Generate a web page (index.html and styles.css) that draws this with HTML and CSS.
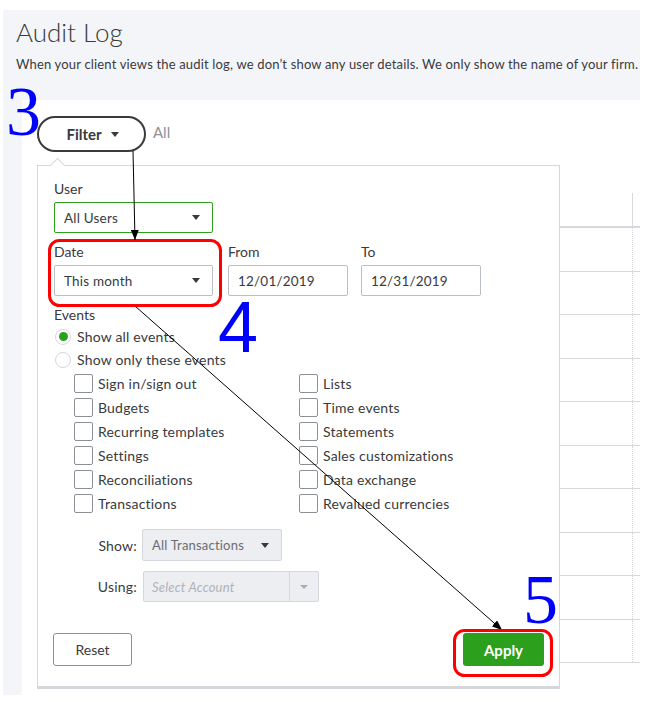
FILE: index.html
```html
<!DOCTYPE html>
<html>
<head>
<meta charset="utf-8">
<link rel="stylesheet" href="styles.css">
</head>
<body>
<div class="page">
  <div class="header">
    <h1 class="title">Audit Log</h1>
    <p class="desc">When your client views the audit log, we don’t show any user details. We only show the name of your firm.</p>
  </div>
  <div class="content">
    <div class="filter-row">
      <button class="pill">Filter <span class="caret"></span></button>
      <span class="all">All</span>
    </div>
    <div class="table">
      <div class="trow thead"><div class="c c1"></div><div class="c c2"></div><div class="c c3"></div><div class="c c4"></div></div>
      <div class="trow"><div class="c c1"></div><div class="c c2"></div><div class="c c3"></div><div class="c c4"></div></div>
      <div class="trow"><div class="c c1"></div><div class="c c2"></div><div class="c c3"></div><div class="c c4"></div></div>
      <div class="trow"><div class="c c1"></div><div class="c c2"></div><div class="c c3"></div><div class="c c4"></div></div>
      <div class="trow"><div class="c c1"></div><div class="c c2"></div><div class="c c3"></div><div class="c c4"></div></div>
      <div class="trow"><div class="c c1"></div><div class="c c2"></div><div class="c c3"></div><div class="c c4"></div></div>
      <div class="trow"><div class="c c1"></div><div class="c c2"></div><div class="c c3"></div><div class="c c4"></div></div>
      <div class="trow"><div class="c c1"></div><div class="c c2"></div><div class="c c3"></div><div class="c c4"></div></div>
      <div class="trow"><div class="c c1"></div><div class="c c2"></div><div class="c c3"></div><div class="c c4"></div></div>
      <div class="trow"><div class="c c1"></div><div class="c c2"></div><div class="c c3"></div><div class="c c4"></div></div>
      <div class="trow"><div class="c c1"></div><div class="c c2"></div><div class="c c3"></div><div class="c c4"></div></div>
    </div>

    <div class="pop">
      <span class="notch"></span>
      <div class="field">
        <div class="lbl">User</div>
        <div class="select sel-user"><span>All Users</span><span class="caret"></span></div>
      </div>
      <div class="date-row">
        <div class="field">
          <div class="lbl">Date</div>
          <div class="select sel-date"><span>This month</span><span class="caret"></span></div>
        </div>
        <div class="field">
          <div class="lbl">From</div>
          <div class="input">12/01/2019</div>
        </div>
        <div class="field">
          <div class="lbl">To</div>
          <div class="input">12/31/2019</div>
        </div>
      </div>
      <div class="lbl events-lbl">Events</div>
      <div class="radio-row"><span class="radio on"></span>Show all events</div>
      <div class="radio-row"><span class="radio"></span>Show only these events</div>
      <div class="checks">
        <div class="chk"><span class="box"></span>Sign in/sign out</div>
        <div class="chk"><span class="box"></span>Lists</div>
        <div class="chk"><span class="box"></span>Budgets</div>
        <div class="chk"><span class="box"></span>Time events</div>
        <div class="chk"><span class="box"></span>Recurring templates</div>
        <div class="chk"><span class="box"></span>Statements</div>
        <div class="chk"><span class="box"></span>Settings</div>
        <div class="chk"><span class="box"></span>Sales customizations</div>
        <div class="chk"><span class="box"></span>Reconciliations</div>
        <div class="chk"><span class="box"></span>Data exchange</div>
        <div class="chk"><span class="box"></span>Transactions</div>
        <div class="chk"><span class="box"></span>Revalued currencies</div>
      </div>
      <div class="opt-row show-row">
        <span class="opt-lbl">Show:</span>
        <div class="select sel-show"><span>All Transactions</span><span class="caret"></span></div>
      </div>
      <div class="opt-row using-row">
        <span class="opt-lbl">Using:</span>
        <div class="sel-using"><span class="ph">Select Account</span><span class="using-btn"><span class="caret light"></span></span></div>
      </div>
      <div class="btn-row">
        <button class="btn reset">Reset</button>
        <button class="btn apply">Apply</button>
      </div>
    </div>
  </div>
</div>

<svg class="annot" width="648" height="702" viewBox="0 0 648 702">
  <defs>
    <marker id="ah" markerWidth="10" markerHeight="8" refX="10" refY="4" orient="auto" markerUnits="userSpaceOnUse">
      <path d="M0,0 L10,4 L0,8 Z" fill="#000"/>
    </marker>
  </defs>
  <text class="num serif" x="6" y="135">3</text>
  <rect x="49.5" y="240.5" width="171" height="65" rx="10" ry="10" fill="none" stroke="#ff0000" stroke-width="3"/>
  <text class="num sans" x="218" y="352">4</text>
  <line x1="133" y1="151" x2="135" y2="240" stroke="#000" stroke-width="1" marker-end="url(#ah)"/>
  <line x1="135" y1="306" x2="502" y2="630" stroke="#000" stroke-width="1" marker-end="url(#ah)"/>
  <text class="num serif" x="523" y="623">5</text>
  <rect x="454.5" y="630.5" width="97" height="45" rx="10" ry="10" fill="none" stroke="#ff0000" stroke-width="3"/>
</svg>
</body>
</html>
```
FILE: styles.css
```css
* { box-sizing: border-box; }
html, body { margin: 0; padding: 0; }
body {
  position: relative;
  width: 648px;
  height: 702px;
  overflow: hidden;
  background: #fff;
  font-family: Lato, "Open Sans", sans-serif;
  color: #393a3d;
}
.page {
  margin: 10px 0 0 3px;
  width: 637px;
  height: 685px;
  background: #f4f5f8;
  overflow: hidden;
  display: flex;
  flex-direction: column;
}
.header {
  height: 90px;
  padding: 6px 0 0 13px;
}
.title {
  margin: 0;
  font-size: 26px;
  font-weight: 300;
  line-height: 32px;
  color: #393a3d;
}
.desc {
  margin: 7px 0 0;
  font-size: 13px;
  line-height: 18px;
  letter-spacing: 0.17px;
  white-space: nowrap;
  color: #393a3d;
}
.content {
  position: relative;
  margin-left: 19px;
  flex: 1;
  background: #fff;
}
.filter-row {
  display: flex;
  align-items: center;
  padding: 16px 0 0 15px;
  gap: 7px;
}
.pill {
  width: 109px;
  height: 36px;
  border: 2px solid #393a3d;
  border-radius: 18px;
  background: #fff;
  font-family: inherit;
  font-size: 15px;
  font-weight: 700;
  color: #393a3d;
  display: flex;
  align-items: center;
  justify-content: center;
  gap: 9px;
  padding: 0 0 0 2px;
}
.caret {
  width: 0;
  height: 0;
  border-left: 4.5px solid transparent;
  border-right: 4.5px solid transparent;
  border-top: 5px solid #393a3d;
}
.caret.light { border-top-color: #a8abb1; border-left-width: 4px; border-right-width: 4px; border-top-width: 4px; }
.all {
  font-size: 15px;
  color: #8d9096;
  margin-top: -4px;
}
.table {
  margin: 41px 0 0 15px;
}
.trow {
  display: grid;
  grid-template-columns: 131px 113px 352px 7px;
  height: 43.5px;
  border-bottom: 1px solid #d6d8dc;
}
.trow .c { border-right: 1px dotted #d6d8dc; }
.trow .c4 { border-right: none; }
.thead { height: 35px; border-bottom: 2px solid #d6d8dc; }
.thead .c { border-right: 1px solid #d6d8dc; }
.thead .c4 { border-right: none; }

/* popover */
.pop {
  position: absolute;
  left: 15px;
  top: 65px;
  width: 523px;
  height: 524px;
  background: #fff;
  border: 1px solid #d4d7dc;
  border-bottom: 3px solid #d4d7dc;
  padding: 13px 15px 0 16px;
}
.notch {
  position: absolute;
  top: -6px;
  left: 14px;
  width: 11px;
  height: 11px;
  background: #fff;
  border-left: 1px solid #d4d7dc;
  border-top: 1px solid #d4d7dc;
  transform: rotate(45deg);
}
.lbl {
  font-size: 14px;
  line-height: 20px;
  color: #393a3d;
  margin-bottom: 3px;
}
.select, .input {
  height: 31px;
  border: 1px solid #babec5;
  border-radius: 2px;
  display: flex;
  align-items: center;
  justify-content: space-between;
  padding: 0 12px 0 9px;
  font-size: 13.5px;
  letter-spacing: 0.2px;
  color: #393a3d;
  background: #fff;
}
.sel-user { width: 159px; border-color: #2ca01c; }
.sel-date { width: 159px; }
.input { width: 120px; }
.date-row {
  display: flex;
  gap: 15px;
  margin-top: 9px;
}
.date-row .field + .field + .field { margin-left: -2px; }
.events-lbl { margin: 9px 0 0; }
.radio-row {
  display: flex;
  align-items: center;
  height: 23px;
  font-size: 14px;
  letter-spacing: 0.2px;
  color: #393a3d;
  padding-left: 1px;
}
.radio {
  width: 16px;
  height: 16px;
  border: 1px solid #d4d7dc;
  border-radius: 50%;
  margin-right: 6px;
  display: flex;
  align-items: center;
  justify-content: center;
}
.radio.on::after {
  content: "";
  width: 9px;
  height: 9px;
  border-radius: 50%;
  background: #2ca01c;
}
.checks {
  display: grid;
  grid-template-columns: 225px 1fr;
  margin: 0 0 0 20px;
}
.chk {
  display: flex;
  align-items: center;
  height: 24px;
  font-size: 14px;
  letter-spacing: 0.2px;
  color: #393a3d;
}
.box {
  width: 19px;
  height: 19px;
  border: 1px solid #8d9096;
  border-radius: 2px;
  margin-right: 5px;
}
.opt-row {
  display: flex;
  align-items: center;
}
.show-row { margin-top: 14px; }
.using-row { margin-top: 10px; }
.opt-lbl {
  width: 83px;
  text-align: right;
  font-size: 14px;
  letter-spacing: 0.2px;
  color: #393a3d;
  margin-right: 5px;
}
.sel-show {
  width: 140px;
  height: 32px;
  background: #eceef1;
  border-color: #d4d7dc;
  color: #6b6c72;
  font-size: 13px;
  padding-right: 12px;
}
.sel-using {
  width: 176px;
  height: 31px;
  margin-left: 1px;
  background: #eceef1;
  border: 1px solid #d4d7dc;
  border-radius: 2px;
  display: flex;
  align-items: center;
}
.ph {
  flex: 1;
  font-size: 13px;
  font-style: italic;
  letter-spacing: 0.2px;
  color: #b0b3b9;
  padding-left: 8px;
}
.using-btn {
  width: 29px;
  height: 100%;
  border-left: 1px solid #d4d7dc;
  display: flex;
  align-items: center;
  justify-content: center;
}
.btn-row {
  display: flex;
  justify-content: space-between;
  margin: 31px 0 0 -1px;
}
.btn {
  height: 33px;
  font-family: inherit;
  font-size: 14px;
  border-radius: 3px;
}
.reset {
  width: 79px;
  border: 1px solid #8d9096;
  background: #fff;
  color: #393a3d;
}
.apply {
  width: 81px;
  border: none;
  background: #2ca01c;
  color: #fff;
  font-weight: 700;
  font-size: 15px;
}

/* annotation overlay */
.annot {
  position: absolute;
  left: 0;
  top: 0;
  pointer-events: none;
}
.num { fill: #0000ff; }
.serif { font-family: "Liberation Serif", serif; font-size: 70px; }
.sans { font-family: "Liberation Sans", sans-serif; font-size: 72px; }
```
